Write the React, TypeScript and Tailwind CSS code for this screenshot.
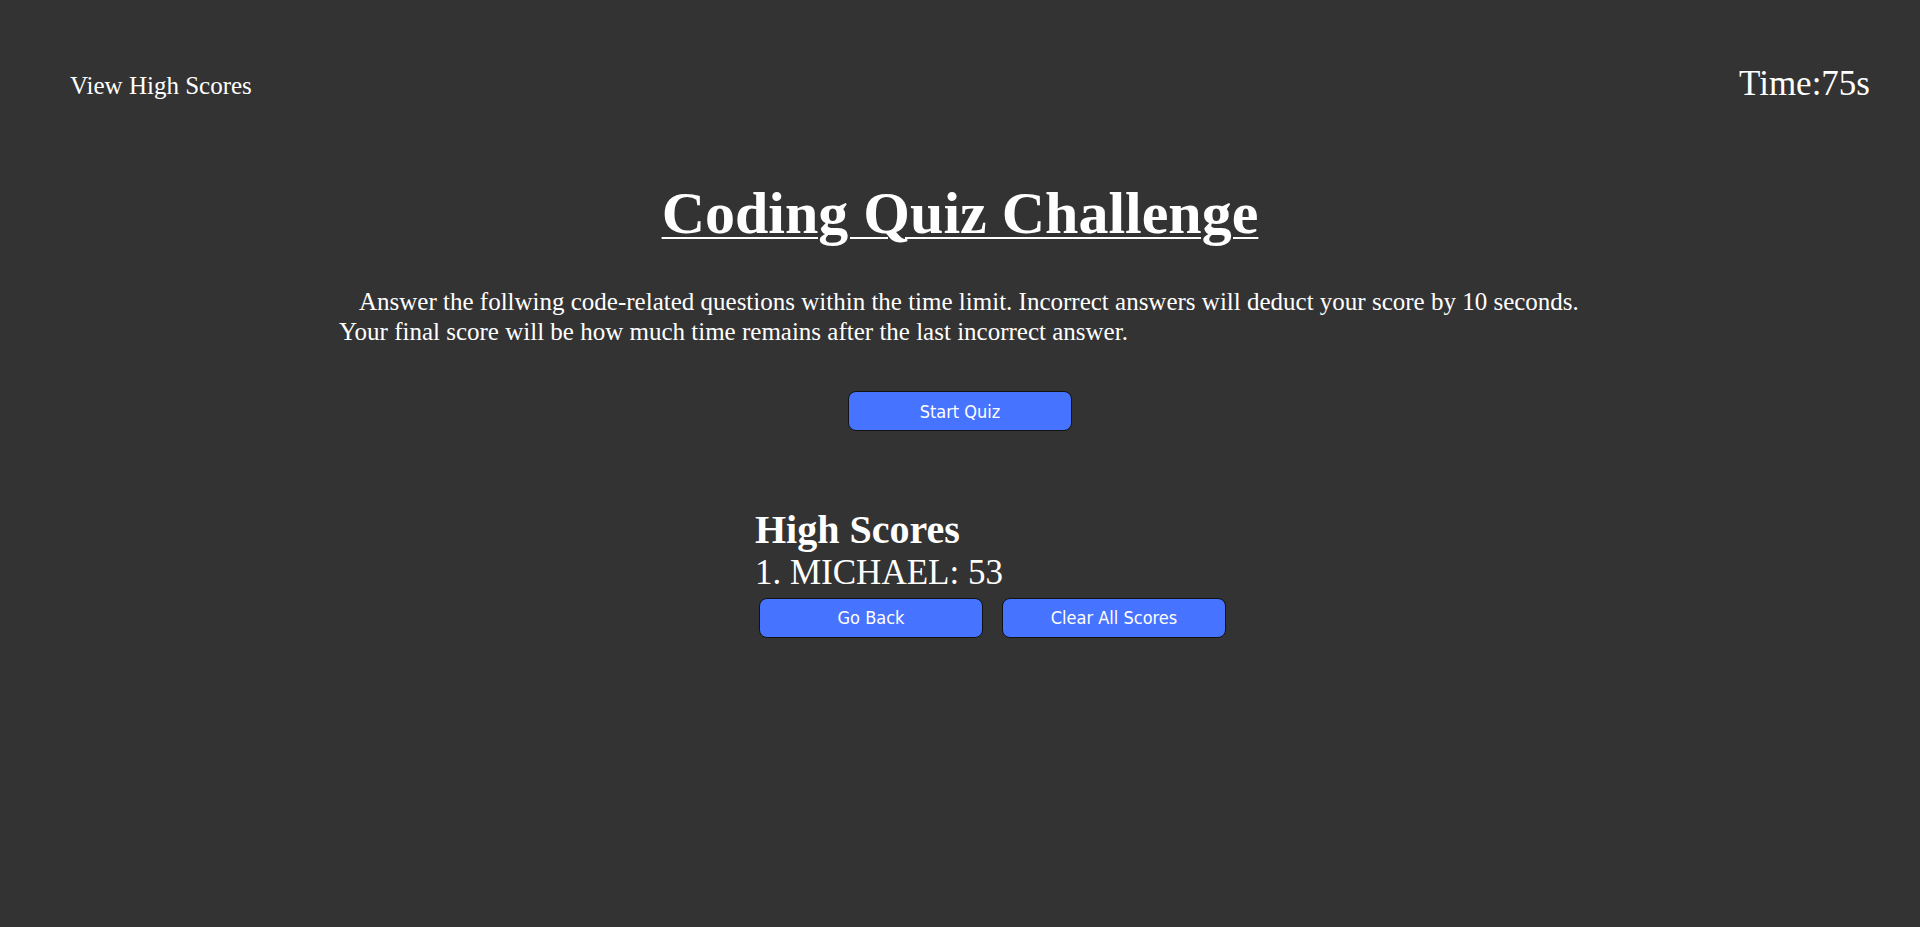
import React from "react";

const serif = "font-['Liberation_Serif','Times_New_Roman',serif]";
const btn =
  "w-[224px] h-[40px] rounded-[8px] border border-[#111] bg-[#4673ff] text-white text-[18px] [font-stretch:condensed] font-['DejaVu_Sans_Condensed','DejaVu_Sans',sans-serif]";

export default function App() {
  return (
    <div className={`min-h-[927px] w-full bg-[#333333] text-white ${serif}`}>
      {/* top bar */}
      <header className="flex items-center justify-between pt-[64px] pl-[70px] pr-[50px]">
        <a className="pt-[4px] text-[25px] leading-[1.15] cursor-pointer">View High Scores</a>
        <div className="text-[35px] leading-[1.15]">Time:75s</div>
      </header>

      <main className="flex flex-col">
        <h1 className="mt-[75px] text-center text-[60px] font-bold leading-[1.15] underline decoration-[2px] underline-offset-[4px]">
          Coding Quiz Challenge
        </h1>

        <p className="ml-[339px] mt-[39px] w-[1260px] indent-[20px] text-[25px] leading-[29.5px]">
          Answer the follwing code-related questions within the time limit. Incorrect answers will deduct your
          score by 10 seconds. Your final score will be how much time remains after the last incorrect answer.
        </p>

        <div className="mt-[45px] flex justify-center">
          <button className={btn}>Start Quiz</button>
        </div>

        {/* high scores */}
        <section className="ml-[755px] mt-[76px] flex flex-col">
          <h2 className="text-[40px] font-bold leading-[1.15]">High Scores</h2>
          <ol className="text-[35px] leading-[1.15]">
            <li>1. MICHAEL: 53</li>
          </ol>
          <div className="ml-[4px] mt-[4px] flex gap-[19px]">
            <button className={btn}>Go Back</button>
            <button className={btn}>Clear All Scores</button>
          </div>
        </section>
      </main>
    </div>
  );
}
